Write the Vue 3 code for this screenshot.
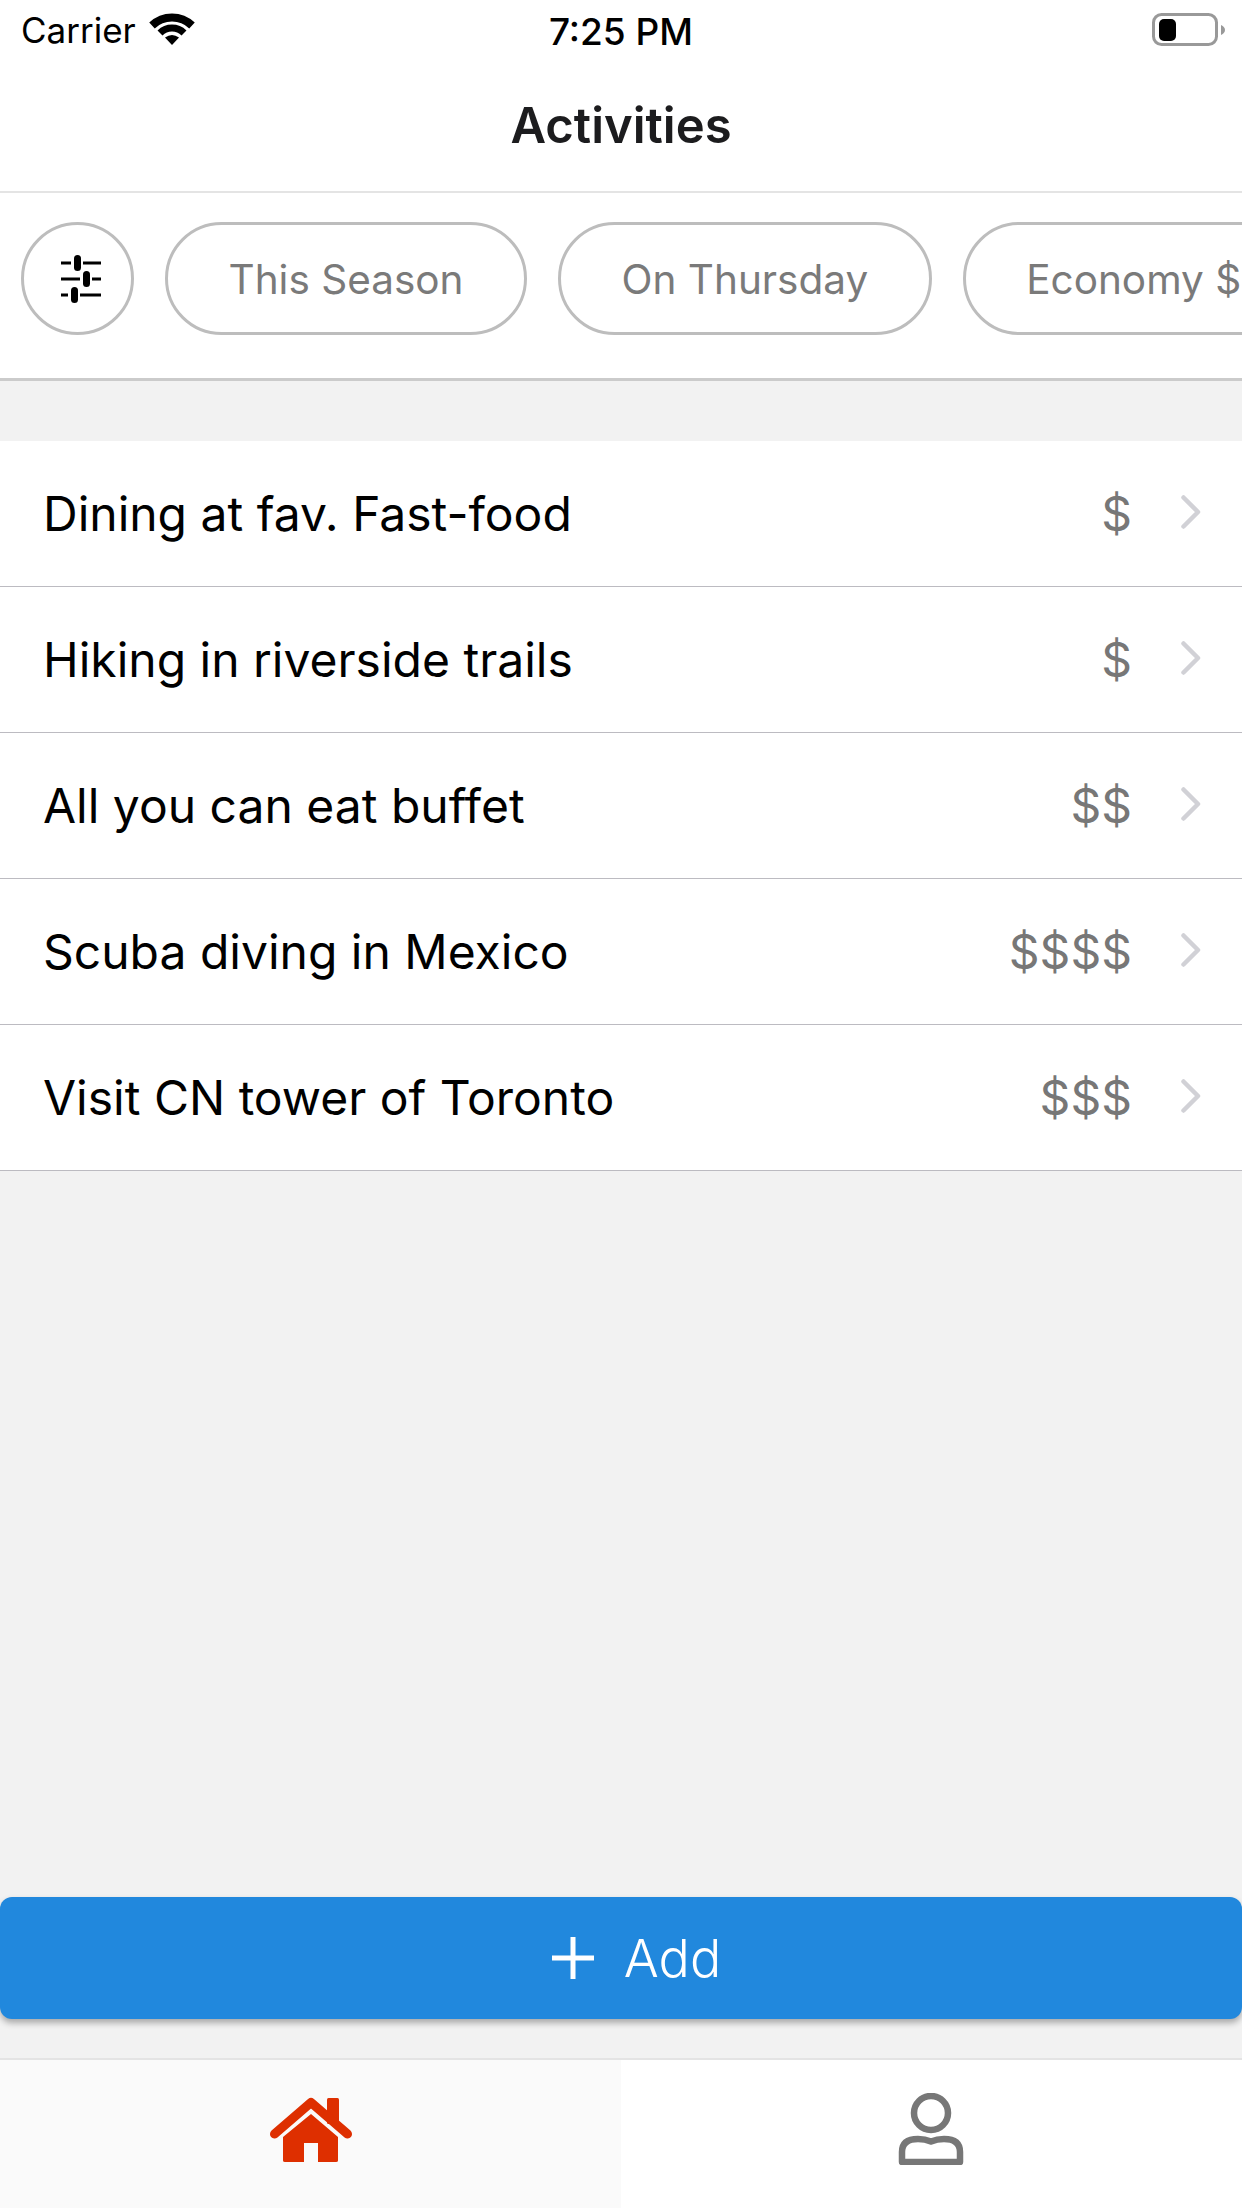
<script setup>
const filters = ['This Season', 'On Thursday', 'Economy $']
const rows = [
  { name: 'Dining at fav. Fast-food', price: '$' },
  { name: 'Hiking in riverside trails', price: '$' },
  { name: 'All you can eat buffet', price: '$$' },
  { name: 'Scuba diving in Mexico', price: '$$$$' },
  { name: 'Visit CN tower of Toronto', price: '$$$' },
]
</script>

<template>
  <div class="page">
    <header class="status">
      <div class="status-left">
        <span>Carrier</span>
        <svg class="wifi" width="46" height="32" viewBox="0 0 46 32">
          <path d="M3 12.5 A29 29 0 0 1 43 12.5" fill="none" stroke="#000" stroke-width="8" stroke-linejoin="round" />
          <path d="M11 20 A17 17 0 0 1 35 20" fill="none" stroke="#000" stroke-width="7" />
          <path d="M16 24.5 Q23 19.5 30 24.5 L23 32 Z" fill="#000" />
        </svg>
      </div>
      <div class="time">7:25 PM</div>
      <div class="status-right">
        <svg width="74" height="34" viewBox="0 0 74 34">
          <rect x="1.5" y="1.5" width="63" height="30" rx="8" fill="none" stroke="#999" stroke-width="3" />
          <rect x="7" y="6" width="17" height="22" rx="5" fill="#000" />
          <path d="M69 12 Q73 14 73 17 Q73 20 69 22 Z" fill="#999" />
        </svg>
      </div>
    </header>

    <nav class="nav">Activities</nav>

    <section class="filters">
      <button class="circle">
        <svg width="40" height="48" viewBox="0 0 40 48">
          <g stroke="#000" stroke-width="3">
            <path d="M0 8H10M22 8H40M0 24H19M31 24H40M0 40H7M19 40H40" />
          </g>
          <rect x="13" y="0" width="7" height="16" rx="3.5" fill="#000" />
          <rect x="22" y="16" width="7" height="16" rx="3.5" fill="#000" />
          <rect x="10" y="32" width="7" height="16" rx="3.5" fill="#000" />
        </svg>
      </button>
      <button v-for="f in filters" :key="f" class="pill">{{ f }}</button>
    </section>

    <main class="content">
      <ul class="list">
        <li v-for="r in rows" :key="r.name" class="row">
          <span class="name">{{ r.name }}</span>
          <span class="price">{{ r.price }}</span>
          <svg class="chev" width="20" height="34" viewBox="0 0 20 34">
            <path d="M2.5 2.5 L17 17 L2.5 31.5" fill="none" stroke="#d1d1d6" stroke-width="4.5" stroke-linecap="round" stroke-linejoin="round" />
          </svg>
        </li>
      </ul>
    </main>

    <button class="add">
      <svg width="42" height="42" viewBox="0 0 42 42">
        <path d="M21 0V42M0 21H42" stroke="#fff" stroke-width="5" />
      </svg>
      <span>Add</span>
    </button>

    <footer class="tabs">
      <div class="tab active">
        <svg width="82" height="68" viewBox="0 0 82 68">
          <rect x="57" y="2" width="12" height="26" rx="1.5" fill="#de2f00" />
          <path d="M4.5 38 L41 6.5 L77.5 38" fill="none" stroke="#de2f00" stroke-width="9" stroke-linecap="round" stroke-linejoin="round" />
          <path d="M41 18 L68 41 V64.5 Q68 66 66 66 H48 V47 H34 V66 H15 Q13 66 13 64.5 V41 Z" fill="#de2f00" />
        </svg>
      </div>
      <div class="tab person">
        <svg width="66" height="72" viewBox="0 0 66 72">
          <circle cx="33" cy="20" r="17" fill="none" stroke="#777" stroke-width="6.5" />
          <path d="M4 69 V59 Q4 46 20 46 Q27 46 33 48.5 Q39 46 46 46 Q62 46 62 59 V69 Z" fill="none" stroke="#777" stroke-width="6.5" stroke-linejoin="round" />
        </svg>
      </div>
    </footer>
  </div>
</template>

<style>
html, body { margin: 0; background: #fff; }
</style>

<style scoped>
.page {
  width: 1242px;
  height: 2208px;
  display: flex;
  flex-direction: column;
  overflow: hidden;
  background: #f2f2f2;
  font-family: Inter, "Liberation Sans", sans-serif;
}
.status {
  height: 60px;
  background: #fff;
  display: grid;
  grid-template-columns: 1fr auto 1fr;
  align-items: center;
  padding: 0 21px;
  font-size: 35px;
  color: #000;
}
.status-left {
  display: flex;
  align-items: center;
  gap: 13px;
}
.wifi { margin-top: -3px; }
.time {
  font-size: 37px;
  font-weight: 500;
  padding-top: 2px;
}
.status-right {
  display: flex;
  justify-content: flex-end;
  margin: -1px -5px 0 0;
}
.nav {
  height: 131px;
  background: #fff;
  border-bottom: 2px solid #e4e4e4;
  display: flex;
  align-items: center;
  justify-content: center;
  font-size: 49px;
  font-weight: 600;
  color: #1c1c1e;
}
.filters {
  height: 188px;
  box-sizing: border-box;
  background: #fff;
  border-bottom: 3px solid #cbcbcb;
  display: flex;
  align-items: flex-start;
  gap: 31px;
  padding: 29px 0 0 21px;
  overflow: hidden;
}
.circle,
.pill {
  box-sizing: border-box;
  height: 113px;
  flex: none;
  background: #fff;
  border: 3px solid #bdbdbd;
  border-radius: 57px;
  font-family: inherit;
}
.circle {
  width: 113px;
  padding: 0 0 0 6px;
  display: flex;
  align-items: center;
  justify-content: center;
}
.pill {
  padding: 2px 60.5px 0;
  font-size: 40.5px;
  color: #7a7a7a;
}
.content {
  flex: 1;
  padding-top: 60px;
}
.list {
  list-style: none;
  margin: 0;
  padding: 0;
  background: #fff;
}
.row {
  height: 146px;
  box-sizing: border-box;
  border-bottom: 1px solid #bcbbc1;
  display: flex;
  align-items: center;
  padding: 0 41px 0 43px;
  font-size: 48px;
  color: #000;
}
.name { flex: 1; }
.price {
  color: #777;
  margin-right: 49px;
}
.chev { margin-top: -3px; }
.add {
  height: 122px;
  border: 0;
  border-radius: 12px;
  background: #2188dd;
  box-shadow: 0 4px 6px rgba(0, 0, 0, 0.3);
  color: #fff;
  font-family: inherit;
  font-size: 52px;
  font-weight: 300;
  display: flex;
  align-items: center;
  justify-content: center;
  gap: 30px;
  margin-bottom: 39px;
  padding: 0 0 0 31px;
}
.tabs {
  height: 150px;
  box-sizing: border-box;
  border-top: 2px solid #e4e4e4;
  background: #fff;
  display: grid;
  grid-template-columns: 1fr 1fr;
}
.tab {
  min-width: 0;
  box-sizing: border-box;
  display: flex;
  align-items: center;
  justify-content: center;
  padding-bottom: 9px;
}
.tab.active { background: #fafafa; }
.tab.person { padding: 0 1px 11px 0; }
</style>
